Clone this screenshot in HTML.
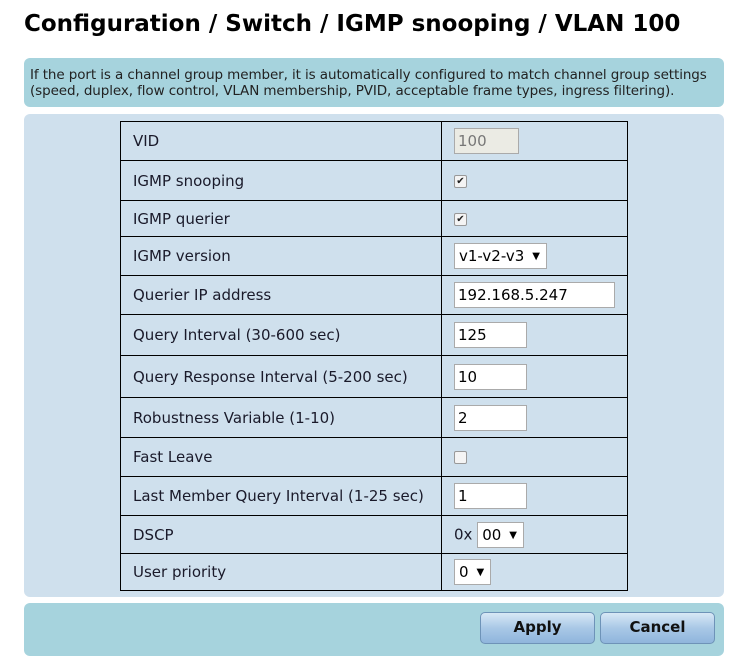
<!DOCTYPE html>
<html><head><style>
body{margin:0;width:738px;height:672px;background:#fff;font-family:"DejaVu Sans","Liberation Sans",sans-serif;color:#222;position:relative;overflow:hidden}
h1{position:absolute;left:24px;top:11px;margin:0;font-size:23px;font-weight:bold;color:#000;white-space:nowrap;letter-spacing:0}
.info{position:absolute;left:24px;top:58px;width:700px;height:49px;background:#a6d3dd;border-radius:6px;font-size:13.5px;line-height:16px;box-sizing:border-box;padding:9px 0 0 6px;color:#222;white-space:nowrap;letter-spacing:-0.1px}
.panel{position:absolute;left:24px;top:114px;width:700px;height:483px;background:#cfe0ed;border-radius:6px}
table{position:absolute;left:120px;top:121px;border-collapse:collapse;width:508px}
td{border:1px solid #000;font-size:15px;padding:0 0 0 12px;color:#1a1a2a}
td:first-child{width:308px}
td:last-child{padding-left:12px}
input.t{font:15px "DejaVu Sans",sans-serif;height:26px;box-sizing:border-box;border:1px solid #aaa;background:#fff;padding:0 3px;color:#000;vertical-align:middle}
.sel{display:inline-block;height:26px;box-sizing:border-box;border:1px solid #aaa;background:#fff;font-size:15px;line-height:24px;padding:0 6px 0 4px;color:#000;vertical-align:middle}
.sel i{font-style:normal;font-size:10px;margin-left:8px;vertical-align:2px}
.cb{display:inline-block;width:11px;height:11px;border:1px solid #999;background:#f4f4f4;border-radius:2px;vertical-align:middle;font-size:10px;line-height:11px;text-align:center;color:#222}
.bar{position:absolute;left:24px;top:603px;width:700px;height:53px;background:#a6d3dd;border-radius:6px}
.btn{position:absolute;top:612px;width:115px;height:32px;box-sizing:border-box;border:1px solid #6e93b8;border-radius:5px;background:linear-gradient(#d8e8f6,#a9c8e6 50%,#8fb5dc);font-weight:bold;font-size:15px;text-align:center;line-height:29px;color:#111}
</style></head><body>
<h1>Configuration / Switch / IGMP snooping / VLAN 100</h1>
<div class="info">If the port is a channel group member, it is automatically configured to match channel group settings<br>(speed, duplex, flow control, VLAN membership, PVID, acceptable frame types, ingress filtering).</div>
<div class="panel"></div>
<table>
<tr style="height:39px"><td>VID</td><td><input class="t" style="width:65px;background:#ebebe4;color:#777" value="100"></td></tr>
<tr style="height:40px"><td>IGMP snooping</td><td><span class="cb">✔</span></td></tr>
<tr style="height:36px"><td>IGMP querier</td><td><span class="cb">✔</span></td></tr>
<tr style="height:39px"><td>IGMP version</td><td><span class="sel">v1-v2-v3<i>▼</i></span></td></tr>
<tr style="height:39px"><td>Querier IP address</td><td><input class="t" style="width:161px" value="192.168.5.247"></td></tr>
<tr style="height:41px"><td>Query Interval (30-600 sec)</td><td><input class="t" style="width:73px" value="125"></td></tr>
<tr style="height:42px"><td>Query Response Interval (5-200 sec)</td><td><input class="t" style="width:73px" value="10"></td></tr>
<tr style="height:40px"><td>Robustness Variable (1-10)</td><td><input class="t" style="width:73px" value="2"></td></tr>
<tr style="height:39px"><td>Fast Leave</td><td><span class="cb"></span></td></tr>
<tr style="height:39px"><td>Last Member Query Interval (1-25 sec)</td><td><input class="t" style="width:73px" value="1"></td></tr>
<tr style="height:38px"><td>DSCP</td><td>0x <span class="sel">00<i>▼</i></span></td></tr>
<tr style="height:37px"><td>User priority</td><td><span class="sel">0<i>▼</i></span></td></tr>
</table>
<div class="bar"></div>
<div class="btn" style="left:480px">Apply</div>
<div class="btn" style="left:600px">Cancel</div>
</body></html>
